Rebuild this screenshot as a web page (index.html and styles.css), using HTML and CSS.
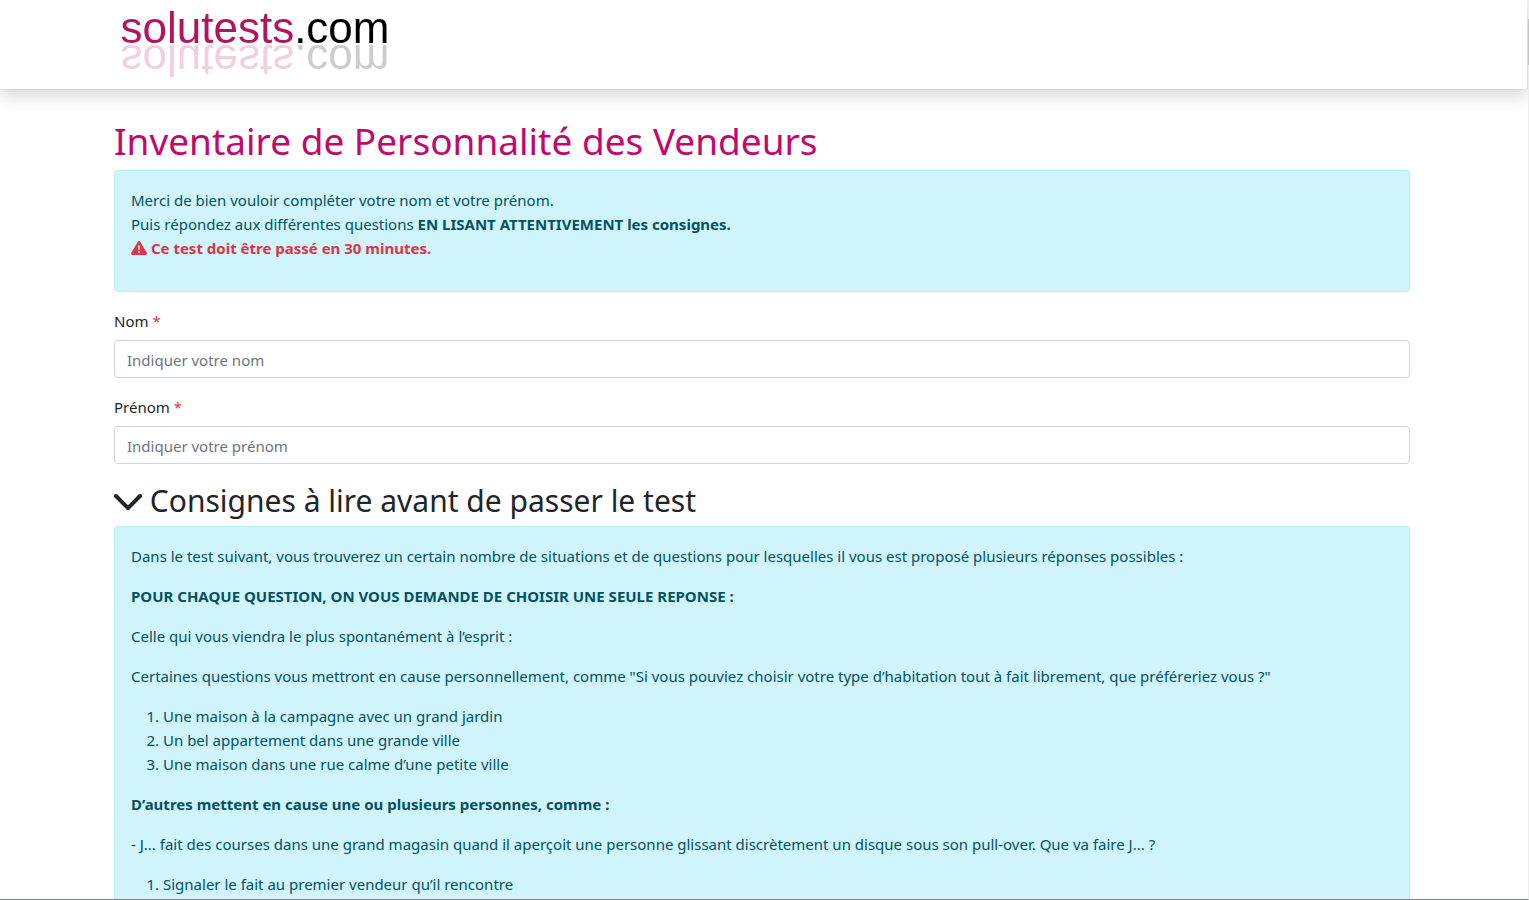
FILE: index.html
```html
<!DOCTYPE html>
<html lang="fr">
<head>
<meta charset="UTF-8">
<meta name="viewport" content="width=device-width, initial-scale=1.0">
<title>Inventaire de Personnalité des Vendeurs</title>
<link rel="stylesheet" href="styles.css">
</head>
<body>
    <header class="header">
        <div class="container">
            <a class="logo" href="#"><span class="logo-name">solutests</span>.com</a>
        </div>
    </header>

    <main class="content">
        <div class="container">
            <h1>Inventaire de Personnalité des Vendeurs</h1>
            <div class="alert">
                <p>
                    Merci de bien vouloir compléter votre nom et votre prénom.<br>
                    Puis répondez aux différentes questions <strong>EN LISANT ATTENTIVEMENT les consignes.</strong><br>
                    <strong class="danger"><svg class="icon-warning" viewBox="0 0 512 512" aria-hidden="true"><path fill="currentColor" fill-rule="evenodd" d="M256 32c14.200 0 27.300 7.500 34.500 19.800l216 368c7.300 12.400 7.300 27.700 .2 40.100S486.300 480 472 480H40c-14.300 0-27.600-7.700-34.700-20.100s-7-27.800 .2-40.100l216-368C228.700 39.500 241.800 32 256 32zm0 128c-13.300 0-24 10.700-24 24V296c0 13.300 10.700 24 24 24s24-10.700 24-24V184c0-13.300-10.700-24-24-24zm32 224a32 32 0 1 0-64 0 32 32 0 1 0 64 0z"/></svg> Ce test doit être passé en 30 minutes.</strong>
                </p>
            </div>

            <form id="testForm">
                <div class="field">
                    <label for="nom">Nom <span class="required">*</span></label>
                    <input type="text" id="nom" name="nom" placeholder="Indiquer votre nom" required>
                </div>
                <div class="field">
                    <label for="prenom">Prénom <span class="required">*</span></label>
                    <input type="text" id="prenom" name="prenom" placeholder="Indiquer votre prénom" required>
                </div>
            </form>

            <h2><svg class="icon-chevron" viewBox="0 0 448 512" aria-hidden="true"><path fill="currentColor" d="M201.400 406.600c12.500 12.500 32.800 12.500 45.300 0l192-192c12.500-12.500 12.500-32.800 0-45.300s-32.800-12.500-45.300 0L224 338.700 54.600 169.400c-12.500-12.500-32.800-12.500-45.300 0s-12.500 32.800 0 45.300l192 192z"/></svg> Consignes à lire avant de passer le test</h2>
            <div class="alert">
                <p>Dans le test suivant, vous trouverez un certain nombre de situations et de questions pour lesquelles il vous est proposé plusieurs réponses possibles :</p>
                <p><strong>POUR CHAQUE QUESTION, ON VOUS DEMANDE DE CHOISIR UNE SEULE REPONSE :</strong></p>
                <p>Celle qui vous viendra le plus spontanément à l’esprit :</p>
                <p>Certaines questions vous mettront en cause personnellement, comme "Si vous pouviez choisir votre type d’habitation tout à fait librement, que préféreriez vous ?"</p>
                <ol>
                    <li>Une maison à la campagne avec un grand jardin</li>
                    <li>Un bel appartement dans une grande ville</li>
                    <li>Une maison dans une rue calme d’une petite ville</li>
                </ol>
                <p><strong>D’autres mettent en cause une ou plusieurs personnes, comme :</strong></p>
                <p>- J... fait des courses dans une grand magasin quand il aperçoit une personne glissant discrètement un disque sous son pull-over. Que va faire J... ?</p>
                <ol>
                    <li>Signaler le fait au premier vendeur qu’il rencontre</li>
                </ol>
            </div>
        </div>
    </main>
</body>
</html>
```
FILE: styles.css
```css
* {
    box-sizing: border-box;
}

body {
    display: flex;
    flex-direction: column;
    height: 100vh;
    margin: 0;
    overflow: hidden;
    border-right: 1px solid #ededed;
    border-bottom: 1px solid #85878b;
    background-color: #fff;
    color: #212529;
    font-family: "Segoe UI", "Noto Sans", "Open Sans", sans-serif;
    font-size: 15px;
    line-height: 24px;
}

/* scrollbar thumb */
body::after {
    content: "";
    position: fixed;
    top: 19px;
    right: 0;
    width: 1px;
    height: 46px;
    background-color: #c4c4c4;
}

.container {
    max-width: 1320px;
    margin: 0 auto;
    padding: 0 12px;
}

.header {
    flex: none;
    height: 89px;
    padding-right: 4px;
    margin-right: 1px;
    background-color: #fff;
    box-shadow: 0 8px 16px rgba(0, 0, 0, 0.15), 0 0 1px rgba(0, 0, 0, 0.3);
}

.logo {
    display: inline-block;
    margin: 3px 0 0 7px;
    color: #000;
    font-family: Arial, "Liberation Sans", sans-serif;
    font-size: 44px;
    line-height: 50px;
    text-decoration: none;
    -webkit-box-reflect: below -18px linear-gradient(rgba(0, 0, 0, 0.2), rgba(0, 0, 0, 0.2));
}

.logo-name {
    color: #b5135b;
}

.content {
    flex: 1;
    min-height: 0;
    padding: 29px 4px 0 0;
}

h1,
h2 {
    margin: 0 0 6px;
    font-weight: 400;
}

h1 {
    color: #c2096b;
    font-size: 37px;
    line-height: 46px;
}

h2 {
    padding-top: 2px;
    font-size: 30px;
    line-height: 38px;
}

p,
ol {
    margin: 0 0 16px;
}

ol {
    padding-left: 32px;
}

.alert {
    margin-bottom: 16px;
    padding: 17px 16px 15px;
    border: 1px solid #b6effb;
    border-radius: 4px;
    background-color: #cff4fc;
    color: #055160;
}

.danger,
.required {
    color: #dc3545;
}

.icon-warning {
    width: 16px;
    height: 16px;
    vertical-align: -2px;
}

.icon-chevron {
    width: 28px;
    height: 32px;
    vertical-align: -4px;
}

.field {
    margin-bottom: 16px;
}

.field label {
    display: block;
    padding-top: 1px;
    margin-bottom: 7px;
}

.field input {
    display: block;
    width: 100%;
    height: 38px;
    padding: 7px 12px 5px;
    border: 1px solid #ced4da;
    border-radius: 4px;
    background-color: #fff;
    color: #212529;
    font: inherit;
}

.field input::placeholder {
    color: #6c757d;
    opacity: 1;
}
```
